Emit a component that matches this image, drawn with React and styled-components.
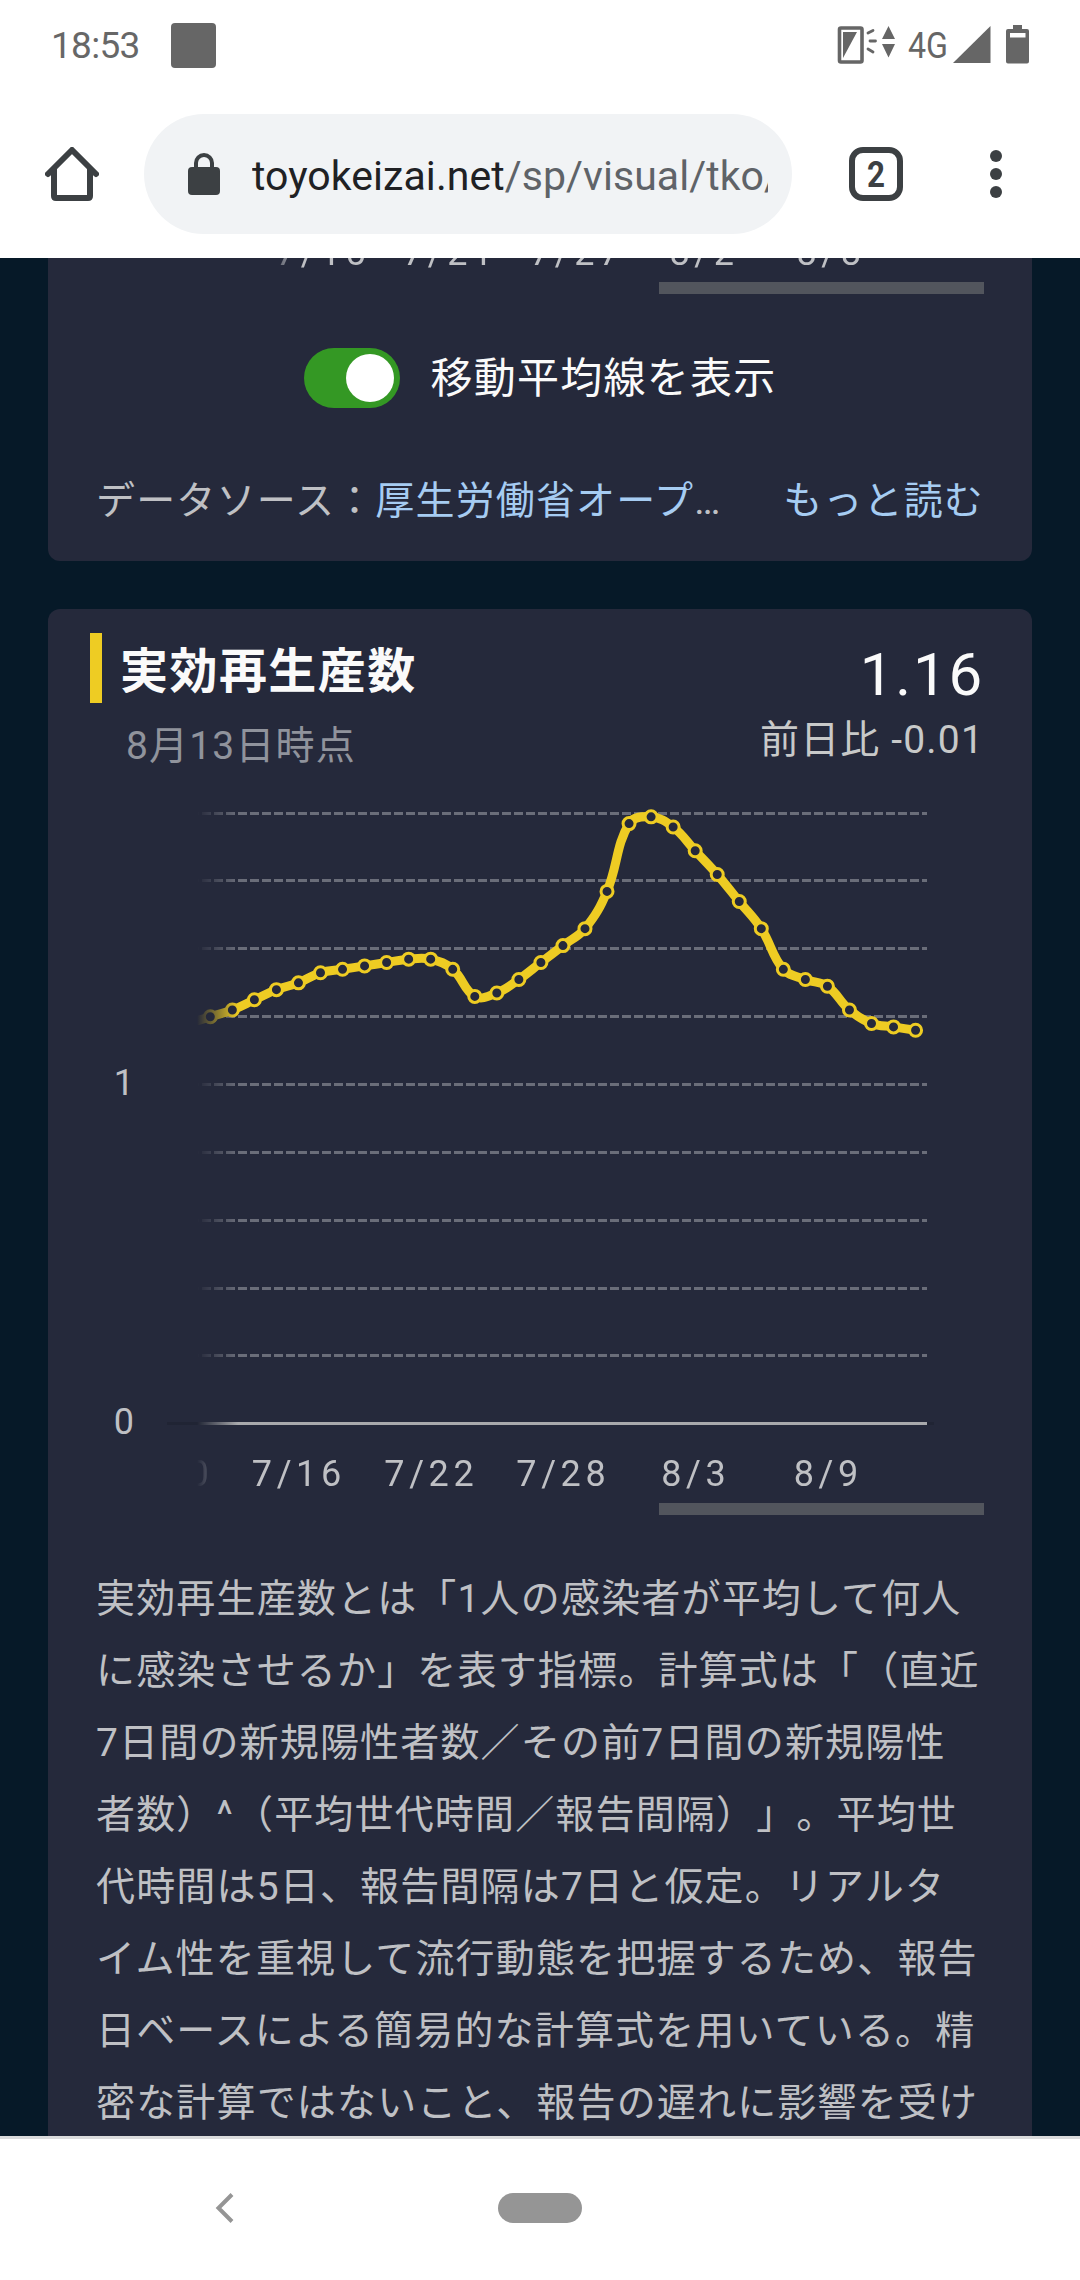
import React from "react";
import styled, { createGlobalStyle } from "styled-components";

const GlobalStyle = createGlobalStyle`
  * {
    box-sizing: border-box;
  }
  body {
    margin: 0;
    background: #fff;
    font-family: Roboto, "Noto Sans CJK JP", sans-serif;
    text-spacing-trim: space-all;
  }
`;

const Screen = styled.div`
  display: flex;
  flex-direction: column;
  width: 1080px;
  height: 2280px;
  overflow: hidden;
  background: #fff;
`;

const StatusBar = styled.div`
  display: flex;
  align-items: center;
  justify-content: space-between;
  height: 90px;
  padding: 0 50px 0 51px;
`;

const StatusLeft = styled.div`
  display: flex;
  align-items: center;
  gap: 31px;
`;

const Clock = styled.span`
  width: 89px;
  font-size: 37px;
  line-height: 44px;
  padding-top: 2px;
  letter-spacing: -0.7px;
  color: #676767;
`;

const Notification = styled.div`
  width: 45px;
  height: 45px;
  border-radius: 4px;
  background: #666;
`;

const Toolbar = styled.div`
  display: flex;
  align-items: center;
  height: 168px;
  padding: 0 78px 0 45px;
  svg {
    flex-shrink: 0;
  }
`;

const AddressBar = styled.div`
  display: flex;
  align-items: center;
  width: 648px;
  height: 120px;
  margin: 0 57px 0 45px;
  padding: 0 24px 0 44px;
  border-radius: 60px;
  background: #f1f3f5;
`;

const Url = styled.div`
  flex: 1;
  margin-left: 32px;
  padding-top: 3px;
  font-size: 41px;
  line-height: 60px;
  letter-spacing: 0.06px;
  color: #5f6368;
  white-space: nowrap;
  overflow: hidden;
  b {
    font-weight: 400;
    color: #202124;
  }
`;

const TabButton = styled.div`
  display: flex;
  align-items: center;
  justify-content: center;
  width: 54px;
  height: 54px;
  margin-right: 87px;
  border: 6px solid #3c4043;
  border-radius: 14px;
`;

const MenuButton = styled.div`
  display: flex;
  flex-direction: column;
  gap: 6px;
`;

const Dot = styled.span`
  width: 12px;
  height: 12px;
  border-radius: 50%;
  background: #3c4043;
`;

const Viewport = styled.main`
  display: flex;
  flex-direction: column;
  gap: 48px;
  height: 1878px;
  flex-shrink: 0;
  padding: 0 48px;
  overflow: hidden;
  background: #061928;
`;

const Card = styled.section`
  flex-shrink: 0;
  padding: ${(props) => props.$pad};
  border-radius: ${(props) => props.$radius};
  background: #25293b;
  svg {
    display: block;
  }
`;

const ScrollThumb = styled.div`
  width: 325px;
  height: 12px;
  margin-left: auto;
  background: #52555d;
`;

const SwitchRow = styled.div`
  display: flex;
  align-items: center;
  justify-content: center;
  gap: 30px;
  margin-top: 54px;
  padding-left: 1px;
  height: 60px;
  font-size: 42px;
  line-height: 60px;
  letter-spacing: 0.03em;
  color: #fafafa;
`;

const Switch = styled.div`
  display: flex;
  justify-content: flex-end;
  width: 96px;
  height: 60px;
  padding: 6px;
  border-radius: 30px;
  background: #349824;
`;

const Knob = styled.div`
  width: 48px;
  height: 48px;
  border-radius: 50%;
  background: #fff;
`;

const SwitchLabel = styled.span`
  padding-top: 1px;
`;

const SourceRow = styled.div`
  display: flex;
  justify-content: space-between;
  margin-top: 64px;
  height: 58px;
  font-size: 39px;
  line-height: 58px;
  letter-spacing: 0.03em;
  color: #bfc0c4;
`;

const Source = styled.div`
  width: 640px;
  white-space: nowrap;
  overflow: hidden;
  text-overflow: ellipsis;
`;

const Link = styled.a`
  color: #a6ccf2;
`;

const CardHeader = styled.header`
  display: flex;
  justify-content: space-between;
  height: 147px;
`;

const Title = styled.h2`
  margin: 0 0 0 -6px;
  height: 70px;
  padding: 4px 0 0 18px;
  border-left: 12px solid #eecc23;
  font-size: 48px;
  font-weight: 700;
  line-height: 70px;
  letter-spacing: 0.03em;
  color: #fafafa;
`;

const AsOf = styled.div`
  margin-top: 14px;
  padding-left: 30px;
  font-size: 39px;
  line-height: 58px;
  letter-spacing: 0.03em;
  color: #90939c;
`;

const Figures = styled.div`
  display: flex;
  flex-direction: column;
  align-items: flex-end;
  padding-top: 6px;
`;

const Value = styled.div`
  font-size: 60px;
  line-height: 72px;
  letter-spacing: 0.03em;
  color: #fafafa;
`;

const Delta = styled.div`
  font-size: 39px;
  line-height: 58px;
  letter-spacing: 0.03em;
  color: #c8c9c9;
`;

const Description = styled.p`
  margin: 48px 0 0;
  font-size: 39px;
  line-height: 72px;
  letter-spacing: 0.03em;
  color: #bfc0c4;
  white-space: nowrap;
`;

const AxisText = styled.text`
  font-size: 36px;
  letter-spacing: ${(props) => props.$spacing || "4.6px"};
  fill: #bfc0c4;
`;

const NavBar = styled.nav`
  display: flex;
  align-items: center;
  height: 144px;
  padding: 0 0 3px 213px;
  border-top: 3px solid #dadbdc;
  background: #fff;
`;

const HomePill = styled.div`
  width: 84px;
  height: 30px;
  margin-left: 261px;
  border-radius: 15px;
  background: #959595;
`;

const StatusIcons = () => (
  <svg width="194" height="44" viewBox="836 23 194 44" fill="#666">
    <rect x="839.5" y="28" width="22.5" height="34" rx="1.5" fill="none" stroke="#666" strokeWidth="3.6" />
    <path d="M843 32H857L843 58Z" />
    <path d="M868 33L873 30.500M870 41H875.500M868 49L873 52" fill="none" stroke="#666" strokeWidth="2.800" strokeLinecap="round" />
    <path d="M888.500 26L895 39H882ZM888.500 57.500L895 44H882Z" />
    <text x="908" y="58" fontSize="37" textLength="40" lengthAdjust="spacingAndGlyphs">4G</text>
    <path d="M953 63L990.500 26V63Z" />
    <path fillRule="evenodd" d="M1013 25H1022V29H1027Q1029 29 1029 31V61.500Q1029 63.500 1027 63.500H1008Q1006 63.500 1006 61.500V31Q1006 29 1008 29H1013ZM1010 33V37.500H1025.500V33Z" />
  </svg>
);

const HomeIcon = () => (
  <svg width="54" height="54" viewBox="0 0 54 54" fill="none" stroke="#3c4043" strokeWidth="6" strokeLinecap="round">
    <path d="M3 27L27 3L51 27" strokeLinejoin="round" />
    <path d="M9 22V49Q9 51 11 51H43Q45 51 45 49V22" strokeLinecap="butt" />
  </svg>
);

const LockIcon = () => (
  <svg width="32" height="42" viewBox="0 0 32 42">
    <rect y="14" width="32" height="28" rx="4" fill="#3c4043" />
    <path d="M8 16V10a8 8 0 0 1 16 0V16" fill="none" stroke="#3c4043" strokeWidth="4" />
  </svg>
);

const WIDTH = 888;
const BASE_Y = 643;
const UNIT = 338.8;
const FIRST_X = 114.3;
const STEP_X = 22.04;

const values = [
  1.2, 1.22, 1.25, 1.28, 1.3, 1.33, 1.34, 1.35, 1.36, 1.37, 1.37, 1.34, 1.26,
  1.27, 1.31, 1.36, 1.41, 1.46, 1.57, 1.77, 1.79, 1.76, 1.69, 1.62, 1.54, 1.46,
  1.34, 1.31, 1.29, 1.22, 1.18, 1.17, 1.16,
];

// 1.8 down to 0.2, snapped to whole pixels
const gridlines = [33, 100, 168, 236, 304, 372, 440, 508, 575];

const dates = [
  { text: "7/10", x: 68 },
  { text: "7/16", x: 200.5 },
  { text: "7/22", x: 333 },
  { text: "7/28", x: 465 },
  { text: "8/3", x: 597.5 },
  { text: "8/9", x: 730 },
];

const previousDates = [
  { text: "7/15", x: 225 },
  { text: "7/21", x: 352 },
  { text: "7/27", x: 479 },
  { text: "8/2", x: 606 },
  { text: "8/8", x: 733 },
];

const toY = (value) => BASE_Y - value * UNIT;

// one extra point in front, so the line runs out under the fade
const points = [1.18, ...values].map((value, i) => ({
  x: FIRST_X + (i - 1) * STEP_X,
  y: toY(value) + 0.3,
}));

// bezier through every point, tension split by the distance to each neighbour
function smoothPath(pts, tension = 0.4) {
  const controls = pts.map((p, i) => {
    const prev = pts[i - 1] || p;
    const next = pts[i + 1] || p;
    const d0 = Math.hypot(p.x - prev.x, p.y - prev.y);
    const d1 = Math.hypot(next.x - p.x, next.y - p.y);
    const a = (tension * d0) / (d0 + d1);
    const b = (tension * d1) / (d0 + d1);
    const dx = next.x - prev.x;
    const dy = next.y - prev.y;
    return [p.x - a * dx, p.y - a * dy, p.x + b * dx, p.y + b * dy];
  });
  return pts.reduce((path, p, i) => {
    if (i === 0) return `M${p.x},${p.y}`;
    const [, , x1, y1] = controls[i - 1];
    const [x2, y2] = controls[i];
    return `${path}C${x1},${y1} ${x2},${y2} ${p.x},${p.y}`;
  }, "");
}

function Fade({ id, from, to }) {
  return (
    <defs>
      <linearGradient id={`${id}-gradient`} gradientUnits="userSpaceOnUse" x1={from} x2={to} y1="0" y2="0">
        <stop offset="0" stopColor="#000" />
        <stop offset="1" stopColor="#fff" />
      </linearGradient>
      <mask id={id} maskUnits="userSpaceOnUse" x={from} y="0" width={WIDTH} height="723">
        <rect x={from} width={WIDTH} height="723" fill={`url(#${id}-gradient)`} />
      </mask>
    </defs>
  );
}

function Chart() {
  return (
    <svg width={WIDTH} height="723">
      <Fade id="fade" from={101} to={142} />
      <path d="M71 643.5H838" stroke="#202434" strokeWidth="3" />
      <AxisText x="38" y="315" textAnchor="end" $spacing="0">1</AxisText>
      <AxisText x="38" y="654" textAnchor="end" $spacing="0">0</AxisText>
      <g mask="url(#fade)">
        {gridlines.map((y) => (
          <path key={y} d={`M94 ${y + 0.5}H831`} stroke="#6a6d79" strokeWidth="3" strokeDasharray="9 3" />
        ))}
        <path d={`M71 ${BASE_Y + 0.5}H831`} stroke="#a8a9ac" strokeWidth="3" />
        <path d={smoothPath(points)} fill="none" stroke="#eecc23" strokeWidth="9" strokeLinejoin="round" />
        {points.slice(1).map((p) => (
          <circle key={p.x} cx={p.x} cy={p.y} r="6" fill="#25293b" stroke="#eecc23" strokeWidth="3" />
        ))}
        {dates.map((date) => (
          <AxisText key={date.text} x={date.x + 2.3} y="706" textAnchor="middle">{date.text}</AxisText>
        ))}
      </g>
    </svg>
  );
}

function PreviousAxis() {
  return (
    <svg width={WIDTH} height="24">
      <Fade id="fade-previous" from={165} to={207} />
      <g mask="url(#fade-previous)">
        {previousDates.map((date) => (
          <AxisText key={date.text} x={date.x + 2} y="7" textAnchor="middle">{date.text}</AxisText>
        ))}
      </g>
    </svg>
  );
}

const description = [
  "実効再生産数とは「1人の感染者が平均して何人",
  "に感染させるか」を表す指標。計算式は「（直近",
  "7日間の新規陽性者数／その前7日間の新規陽性",
  "者数）^（平均世代時間／報告間隔）」。平均世",
  "代時間は5日、報告間隔は7日と仮定。リアルタ",
  "イム性を重視して流行動態を把握するため、報告",
  "日ベースによる簡易的な計算式を用いている。精",
  "密な計算ではないこと、報告の遅れに影響を受け",
];

export default function App() {
  return (
    <Screen>
      <GlobalStyle />
      <StatusBar>
        <StatusLeft>
          <Clock>18:53</Clock>
          <Notification />
        </StatusLeft>
        <StatusIcons />
      </StatusBar>
      <Toolbar>
        <HomeIcon />
        <AddressBar>
          <LockIcon />
          <Url>
            <b>toyokeizai.net</b>/sp/visual/tko/
          </Url>
        </AddressBar>
        <TabButton>
          <svg width="42" height="42" fill="#3c4043">
            <text x="12" y="34" fontSize="37" fontWeight="700" textLength="18" lengthAdjust="spacingAndGlyphs">2</text>
          </svg>
        </TabButton>
        <MenuButton>
          <Dot />
          <Dot />
          <Dot />
        </MenuButton>
      </Toolbar>
      <Viewport>
        <Card $pad="0 48px 31px" $radius="0 0 12px 12px">
          <PreviousAxis />
          <ScrollThumb />
          <SwitchRow>
            <Switch>
              <Knob />
            </Switch>
            <SwitchLabel>移動平均線を表示</SwitchLabel>
          </SwitchRow>
          <SourceRow>
            <Source>
              データソース：<Link>厚生労働省オープンデータ</Link>
            </Source>
            <Link>もっと読む</Link>
          </SourceRow>
        </Card>
        <Card $pad="24px 48px 48px" $radius="12px 12px 0 0">
          <CardHeader>
            <div>
              <Title>実効再生産数</Title>
              <AsOf>8月13日時点</AsOf>
            </div>
            <Figures>
              <Value>1.16</Value>
              <Delta>前日比 -0.01</Delta>
            </Figures>
          </CardHeader>
          <Chart />
          <ScrollThumb />
          <Description>
            {description.map((line) => (
              <React.Fragment key={line}>
                {line}
                <br />
              </React.Fragment>
            ))}
          </Description>
        </Card>
      </Viewport>
      <NavBar>
        <svg width="24" height="36" viewBox="0 0 24 36" fill="none" stroke="#959595" strokeWidth="4">
          <path d="M19 4.500L5.500 18L19 31.500" />
        </svg>
        <HomePill />
      </NavBar>
    </Screen>
  );
}
